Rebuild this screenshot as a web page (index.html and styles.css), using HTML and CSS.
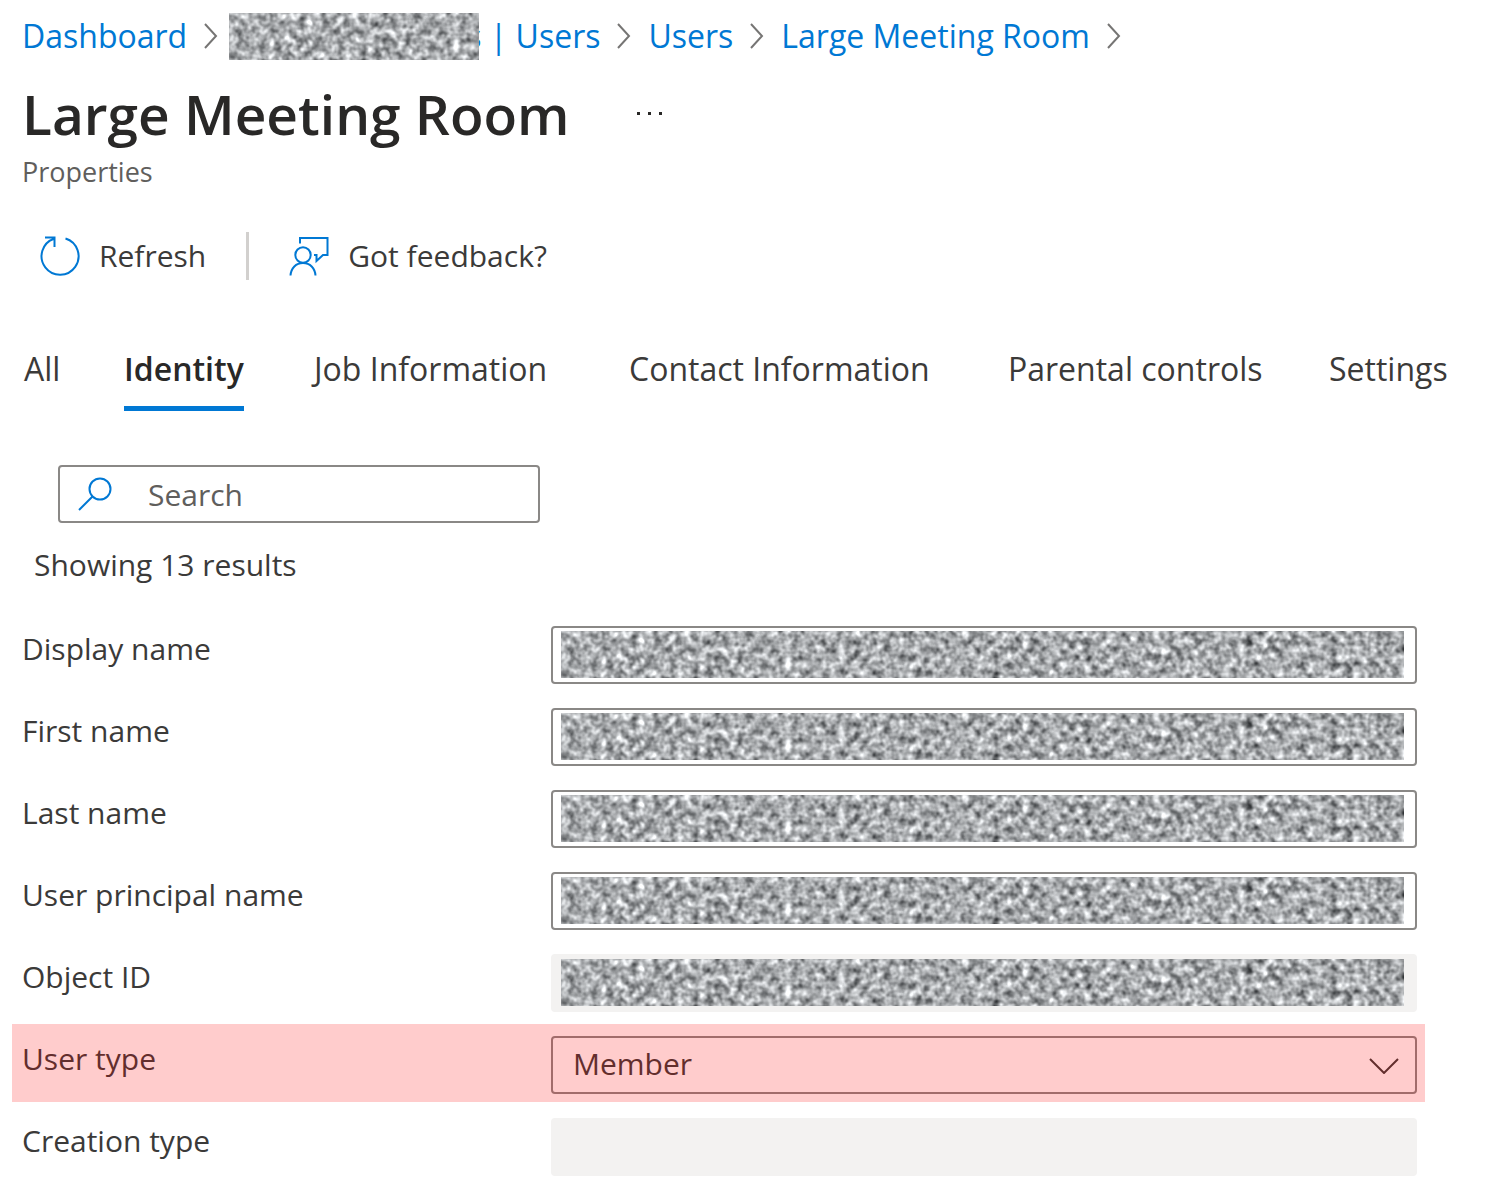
FILE: index.html
```html
<!DOCTYPE html>
<html lang="en">
<head>
<meta charset="utf-8">
<meta name="viewport" content="width=device-width, initial-scale=1">
<title>Large Meeting Room - Properties</title>
<link rel="stylesheet" href="styles.css">
</head>
<body>
<svg class="defs" width="0" height="0" aria-hidden="true">
  <defs>
    <filter id="noise" x="0" y="0" width="100%" height="100%" color-interpolation-filters="sRGB">
      <feTurbulence type="fractalNoise" baseFrequency="0.13" numOctaves="2" seed="7"/>
      <feColorMatrix type="matrix" values="1 0.5 0 0 -0.09  1 0.5 0 0 -0.08  1 0.5 0 0 -0.07  0 0 0 0 1"/>
    </filter>
    <symbol id="chevron" viewBox="0 0 14 26"><path d="M1 1l11 12L1 25"/></symbol>
  </defs>
</svg>
<header class="header">
  <nav class="breadcrumb" aria-label="Breadcrumb">
    <a href="#">Dashboard</a>
    <svg class="sep"><use href="#chevron"/></svg>
    <a href="#" class="tenant"><svg class="redacted-tenant"><rect width="100%" height="100%" filter="url(#noise)"/></svg><span>s | Users</span></a>
    <svg class="sep"><use href="#chevron"/></svg>
    <a href="#">Users</a>
    <svg class="sep"><use href="#chevron"/></svg>
    <a href="#">Large Meeting Room</a>
    <svg class="sep"><use href="#chevron"/></svg>
  </nav>
  <div class="title-row">
    <h1>Large Meeting Room</h1>
    <button class="more" type="button" aria-label="More"><svg width="28" height="4" viewBox="0 0 28 4"><path d="M1 0h3v3H1zM12 0h3v3h-3zM23 0h3v3h-3z"/></svg></button>
  </div>
  <p class="subtitle">Properties</p>
</header>
<div class="toolbar">
  <button type="button">
    <svg width="40" height="42" viewBox="0 0 40 42"><path d="M25.500 3.500A18.500 18.500 0 1 1 14 3.700M5 2.500h9.500V12"/></svg>
    Refresh
  </button>
  <span class="divider"></span>
  <button type="button">
    <svg width="40" height="42" viewBox="0 0 40 42"><path d="M11 8.500V3h27.500v17h-4.500l-6.500 6v-6h-2.500"/><circle cx="14" cy="20" r="7.700"/><path d="M1.500 40.500C2 33 7 28 14 28s12 5 12.500 12.500"/></svg>
    Got feedback?
  </button>
</div>
<nav class="tabs" role="tablist">
  <button type="button" role="tab">All</button>
  <button type="button" role="tab" aria-selected="true">Identity</button>
  <button type="button" role="tab">Job Information</button>
  <button type="button" role="tab">Contact Information</button>
  <button type="button" role="tab">Parental controls</button>
  <button type="button" role="tab">Settings</button>
</nav>
<main>
  <label class="search">
    <svg width="34" height="34" viewBox="0 0 34 34"><circle cx="22" cy="12" r="10.500"/><path d="M14.500 19.500L1 33"/></svg>
    <input type="search" placeholder="Search" aria-label="Search">
  </label>
  <p class="count">Showing 13 results</p>
  <form class="rows">
    <div class="row"><label for="display">Display name</label><div class="field"><input id="display" type="text"><svg class="redacted"><rect width="100%" height="100%" filter="url(#noise)"/></svg></div></div>
    <div class="row"><label for="first">First name</label><div class="field"><input id="first" type="text"><svg class="redacted"><rect width="100%" height="100%" filter="url(#noise)"/></svg></div></div>
    <div class="row"><label for="last">Last name</label><div class="field"><input id="last" type="text"><svg class="redacted"><rect width="100%" height="100%" filter="url(#noise)"/></svg></div></div>
    <div class="row"><label for="upn">User principal name</label><div class="field"><input id="upn" type="text"><svg class="redacted"><rect width="100%" height="100%" filter="url(#noise)"/></svg></div></div>
    <div class="row"><label for="oid">Object ID</label><div class="field"><input id="oid" type="text" disabled><svg class="redacted"><rect width="100%" height="100%" filter="url(#noise)"/></svg></div></div>
    <div class="row highlighted"><label for="utype">User type</label><div class="field"><select id="utype"><option>Member</option><option>Guest</option></select><svg class="caret" viewBox="0 0 30 16"><path d="M1 1l14 14L29 1"/></svg></div></div>
    <div class="row"><label for="ctype">Creation type</label><div class="field"><input id="ctype" type="text" disabled></div></div>
  </form>
</main>
</body>
</html>
```
FILE: styles.css
```css
* { box-sizing: border-box; }
body {
  margin: 0;
  background: #fff;
  color: #3b3a39;
  font: 30px/40px "Open Sans", "Noto Sans", sans-serif;
}
h1, p { margin: 0; }
button {
  padding: 0;
  border: 0;
  background: none;
  color: inherit;
  font: inherit;
  cursor: pointer;
}
svg { flex: none; fill: none; }
.defs { position: absolute; }

.header { padding: 12px 22px 0; }
.breadcrumb {
  display: flex;
  align-items: center;
  gap: 17px;
  height: 48px;
  font-size: 32px;
  white-space: nowrap;
}
.breadcrumb a { color: #0078d4; text-decoration: none; }
.sep { width: 14px; height: 26px; stroke: #767574; stroke-width: 2; }
.tenant { display: flex; align-items: center; margin-left: -6px; }
.redacted-tenant { z-index: 1; width: 250px; height: 47px; margin-right: -13px; }

.title-row { display: flex; align-items: center; gap: 66px; height: 92px; padding-top: 16px; }
h1 { color: #292827; font-size: 55px; line-height: 72px; font-weight: 600; }
.more { display: flex; }
.more svg { fill: #292827; }
.subtitle { color: #605e5c; font-size: 27px; }

.toolbar { display: flex; align-items: center; gap: 40px; padding: 40px 40px 0; }
.toolbar button { display: flex; align-items: center; gap: 19px; }
.toolbar svg { stroke: #0078d4; stroke-width: 2; }
.divider { width: 3px; height: 48px; background: #d2d0ce; }

.tabs {
  display: grid;
  grid-template-columns: 100px 190px 315px 379px 321px auto;
  justify-items: start;
  padding: 66px 24px 0;
  font-size: 32px;
  white-space: nowrap;
}
.tabs button { height: 65px; padding-bottom: 14px; border-bottom: 5px solid transparent; }
.tabs [aria-selected="true"] { border-color: #0078d4; color: #292827; font-weight: 600; }

main { padding: 54px 63px 8px 12px; }
.search {
  display: flex;
  align-items: center;
  gap: 36px;
  width: 482px;
  height: 58px;
  margin-left: 46px;
  padding: 0 18px;
  border: 2px solid #8a8886;
  border-radius: 4px;
}
.search svg { stroke: #0078d4; stroke-width: 2; }
.search input { flex: 1; min-width: 0; padding: 2px 0 0; border: 0; outline: 0; background: none; font: inherit; }
.search input::placeholder { color: #605e5c; opacity: 1; }
.count { margin: 22px 0 0 22px; }

.rows { display: grid; gap: 4px; margin-top: 29px; }
.row {
  position: relative;
  display: grid;
  grid-template-columns: 529px 1fr;
  padding: 12px 8px 8px 10px;
}
.row label { padding-top: 3px; }
.field { position: relative; display: grid; }
.field input, .field select {
  width: 100%;
  height: 58px;
  padding: 0 20px 3px;
  border: 2px solid #8a8886;
  border-radius: 4px;
  background: #fff;
  color: inherit;
  font: inherit;
  appearance: none;
}
.field input:disabled { border-color: #f3f2f1; background: #f3f2f1; }
.field .redacted { position: absolute; left: 10px; top: 5px; width: calc(100% - 23px); height: 47px; }
.caret { position: absolute; right: 18px; top: 22px; width: 30px; height: 16px; stroke: #3b3a39; stroke-width: 2; }
.highlighted::after {
  content: "";
  position: absolute;
  inset: 0;
  background: rgba(255, 0, 0, 0.2);
  pointer-events: none;
}
```
